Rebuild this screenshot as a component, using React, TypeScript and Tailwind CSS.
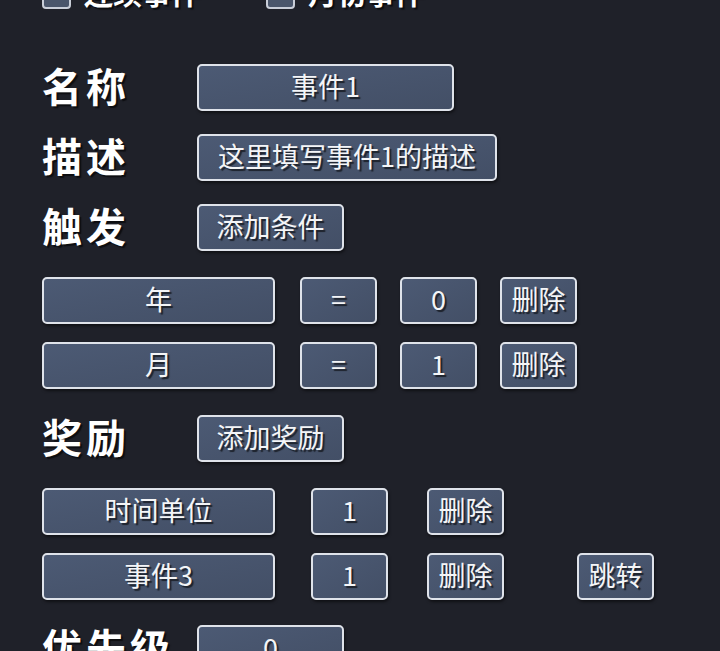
import React from 'react';

const shadow = '[text-shadow:2px_2px_1px_rgba(0,0,0,0.6)]';

function Box({ className = '', children }: { className?: string; children?: React.ReactNode }) {
  return (
    <div
      className={`h-[47px] shrink-0 flex items-center justify-center pb-[4px] rounded-[5px] border-2 border-[#dfe3ea] bg-gradient-to-br from-[#4c5a74] to-[#434f66] text-[27px] leading-none text-[#f4f5f7] shadow-[1px_2px_3px_rgba(0,0,0,0.5)] ${shadow} ${className}`}
    >
      {children}
    </div>
  );
}

function Label({ children }: { children: React.ReactNode }) {
  return (
    <div className={`w-[155px] shrink-0 pb-[6px] text-[40px] font-bold leading-none tracking-[4px] text-white ${shadow}`}>
      {children}
    </div>
  );
}

function Check({ text }: { text: string }) {
  return (
    <div className="flex items-center gap-[13px]">
      <div className="w-[29px] h-[29px] rounded-[4px] border-2 border-[#c9ced8] bg-[#4a566b]" />
      <span className={`pb-[4px] text-[29px] font-bold leading-none text-white ${shadow}`}>{text}</span>
    </div>
  );
}

export default function App() {
  return (
    <div
      className="w-[720px] h-[651px] overflow-hidden bg-[#1f2129] pl-[42px]"
      style={{ fontFamily: '"Noto Sans CJK SC", "Noto Sans", sans-serif' }}
    >
      {/* checkboxes, cut off at the top */}
      <div className="flex items-center h-[29px] mt-[-20px] gap-[66px]">
        <Check text="连续事件" />
        <Check text="月初事件" />
      </div>

      <div className="flex items-center mt-[55px]">
        <Label>名称</Label>
        <Box className="w-[257px]">事件1</Box>
      </div>

      <div className="flex items-center mt-[23px]">
        <Label>描述</Label>
        <Box className="w-[300px]">这里填写事件1的描述</Box>
      </div>

      <div className="flex items-center mt-[23px]">
        <Label>触发</Label>
        <Box className="w-[147px]">添加条件</Box>
      </div>

      <div className="flex items-center mt-[26px]">
        <Box className="w-[233px]">年</Box>
        <Box className="w-[77px] ml-[25px]">=</Box>
        <Box className="w-[77px] ml-[23px]">0</Box>
        <Box className="w-[77px] ml-[23px]">删除</Box>
      </div>

      <div className="flex items-center mt-[18px]">
        <Box className="w-[233px]">月</Box>
        <Box className="w-[77px] ml-[25px]">=</Box>
        <Box className="w-[77px] ml-[23px]">1</Box>
        <Box className="w-[77px] ml-[23px]">删除</Box>
      </div>

      <div className="flex items-center mt-[26px]">
        <Label>奖励</Label>
        <Box className="w-[147px]">添加奖励</Box>
      </div>

      <div className="flex items-center mt-[26px]">
        <Box className="w-[233px]">时间单位</Box>
        <Box className="w-[77px] ml-[36px]">1</Box>
        <Box className="w-[77px] ml-[39px]">删除</Box>
      </div>

      <div className="flex items-center mt-[18px]">
        <Box className="w-[233px]">事件3</Box>
        <Box className="w-[77px] ml-[36px]">1</Box>
        <Box className="w-[77px] ml-[39px]">删除</Box>
        <Box className="w-[77px] ml-[73px]">跳转</Box>
      </div>

      <div className="flex items-center mt-[25px]">
        <Label>优先级</Label>
        <Box className="w-[147px]">0</Box>
      </div>
    </div>
  );
}
